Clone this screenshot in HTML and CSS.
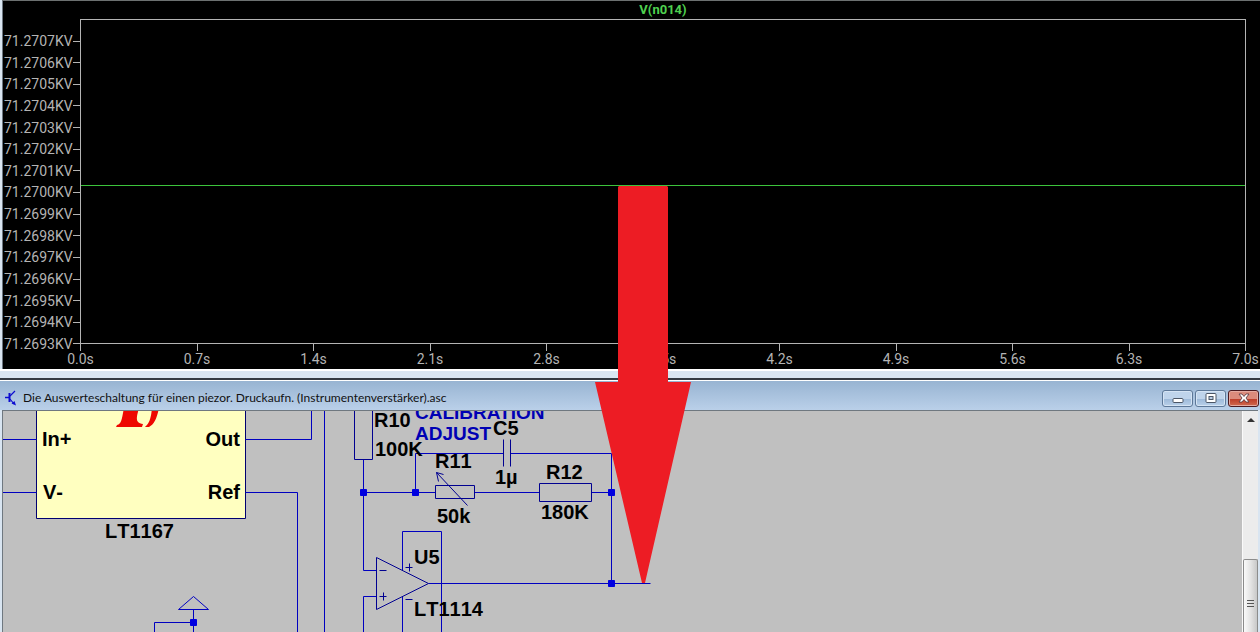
FILE: index.html
```html
<!DOCTYPE html>
<html lang="de">
<head>
<meta charset="utf-8">
<title>V(n014)</title>
<link rel="stylesheet" href="styles.css">
</head>
<body>
<main class="workspace">
  <section class="plot" aria-label="Waveform">
    <h1 class="trace-name">V(n014)</h1>
    <div class="chart">
      <ol class="y-axis">
        <li>71.2707KV</li><li>71.2706KV</li><li>71.2705KV</li><li>71.2704KV</li><li>71.2703KV</li>
        <li>71.2702KV</li><li>71.2701KV</li><li>71.2700KV</li><li>71.2699KV</li><li>71.2698KV</li>
        <li>71.2697KV</li><li>71.2696KV</li><li>71.2695KV</li><li>71.2694KV</li><li>71.2693KV</li>
      </ol>
      <div class="frame">
        <svg class="trace" aria-hidden="true"><line x1="0" y1="51.2%" x2="100%" y2="51.2%"/></svg>
      </div>
      <ol class="x-axis">
        <li>0.0s</li><li>0.7s</li><li>1.4s</li><li>2.1s</li><li>2.8s</li><li>3.5s</li>
        <li>4.2s</li><li>4.9s</li><li>5.6s</li><li>6.3s</li><li>7.0s</li>
      </ol>
    </div>
  </section>
  <div class="divider"></div>
  <section class="schematic">
    <header class="titlebar">
      <svg class="app-icon" width="12" height="16" viewBox="0 0 12 16" aria-hidden="true">
        <path d="M0 7.500H4" stroke-width="1.500"/><path d="M4.500 3V12" stroke-width="2"/><path d="M5 6L10 1M5 9L9 14" stroke-width="1.200"/><path d="M11 15.500L6.500 13.500L9.500 11Z" fill="#0c0cd0" stroke="none"/>
      </svg>
      <h2 class="file-name">Die Auswerteschaltung für einen piezor. Druckaufn. (Instrumentenverstärker).asc</h2>
      <div class="controls">
        <button class="control" aria-label="Minimize"><svg width="12" height="12" viewBox="0 0 12 12"><rect x="1" y="6.500" width="10" height="4" rx="1" fill="#fff" stroke="#4b5666"/></svg></button>
        <button class="control" aria-label="Maximize"><svg width="12" height="12" viewBox="0 0 12 12"><rect x="1" y="1.500" width="10" height="9" rx="1" fill="#fff" stroke="#4b5666"/><rect x="4" y="4.500" width="4" height="3" fill="#b8cde4" stroke="#4b5666"/></svg></button>
        <button class="control close" aria-label="Close"><svg width="12" height="12" viewBox="0 0 12 12"><path d="M1 2H4L6 4.500L8 2H11L8 6L11 10H8L6 7.500L4 10H1L4 6Z" fill="#fff" stroke="#523038" stroke-width=".8"/></svg></button>
      </div>
    </header>
    <div class="document">
      <svg class="circuit" role="img" aria-label="Circuit">
        <g transform="translate(-3 -411)">
          <g class="shapes" transform="translate(.5 .5)">
            <path class="chip" d="M36 400H245V518H36Z"/>
            <path class="wire" d="M2 439H36M2 492H36M245 439H311V405M324 405V632M245 492H297V632"/>
            <path class="wire" d="M363 459V570H376M363 492H435M474 492H539M591 492H611M415 492V453H503M510 453H611V583M428 583H650M402 570V531H441V632M402 596V632M376 596H363V632"/>
            <path class="wire" d="M193 609V632M193 622H154V632"/>
            <path class="part" d="M354 400H372V459H354ZM435 485H474V498H435ZM539 483H591V501H539ZM503 439V466M510 439V466"/>
            <path class="part" d="M376 557L428 583L376 609ZM379 570H386M379 596H386M383 592V600M405 567H412M409 563V571M405 599H412"/>
            <path class="part" d="M467 505L436 472M443 474L436 472L438 481"/>
            <path class="wire" d="M193 596L208 609H178Z"/>
            <path class="junction" d="M360 489h6v6h-6zM412 489h6v6h-6zM608 489h6v6h-6zM608 580h6v6h-6zM190 619h6v6h-6z"/>
          </g>
          <path class="logo" d="M124 408H139C137 416 134 423 143 424L142 427H116L117 425C122 424 122 417 124 408ZM152 408H159C157 417 155 424 149 427H145C150 423 151 417 152 408Z"/>
          <g class="note"><text x="415" y="419">CALIBRATION</text><text x="415" y="440">ADJUST</text></g>
          <g class="label">
            <text x="42" y="446">In+</text><text x="43" y="499">V-</text>
            <text x="240" y="446" text-anchor="end">Out</text><text x="240" y="499" text-anchor="end">Ref</text>
            <text x="105" y="538">LT1167</text>
            <text x="374" y="427">R10</text><text x="375" y="456">100K</text>
            <text x="435" y="468">R11</text><text x="437" y="523">50k</text>
            <text x="493" y="435">C5</text><text x="495" y="484">1µ</text>
            <text x="546" y="479">R12</text><text x="541" y="519">180K</text>
            <text x="414" y="564">U5</text><text x="414" y="616">LT1114</text>
          </g>
        </g>
      </svg>
      <div class="scrollbar">
        <button class="scroll-up" aria-label="Scroll up"><svg width="8" height="4" viewBox="0 0 8 4"><path d="M0 4L4 0L8 4Z" fill="#333"/></svg></button>
        <div class="thumb"><svg width="8" height="8" viewBox="0 0 8 8"><path d="M0 .5H7M0 3.500H7M0 6.500H7" stroke="#555"/></svg></div>
      </div>
    </div>
  </section>
  <svg class="arrow" width="97" height="399" viewBox="0 0 97 399" aria-hidden="true"><path d="M24 1H72L73 2V197H96L50 398H47L0 197H23V2Z" fill="#ed1c24"/></svg>
</main>
</body>
</html>
```
FILE: styles.css
```css
* { box-sizing: border-box; }

body {
  margin: 0;
  background: #d9e5f1;
  font-family: Lato, "Open Sans", sans-serif;
}

h1, h2, ol { margin: 0; padding: 0; list-style: none; }
button { padding: 0; }
svg { display: block; }

.workspace {
  position: relative;
  display: flex;
  flex-direction: column;
  min-height: 100vh;
  overflow: hidden;
}

/* waveform window */
.plot {
  margin-left: 2px;
  border-top: 1px solid #6c7070;
  border-left: 1px solid #6c7680;
  padding: 0 14px 0 1px;
  background: #000;
  overflow: hidden;
  color: #b4b4b4;
  font-family: Roboto, "Liberation Sans", sans-serif;
  font-size: 14px;
}

.trace-name {
  height: 18px;
  padding-left: 76px;
  font-size: 13px;
  line-height: 18px;
  text-align: center;
  color: #4fd04f;
}

.chart {
  display: grid;
  grid-template-columns: 76px 1fr;
  grid-template-rows: 325px 25px;
}

.y-axis {
  display: flex;
  flex-direction: column;
  justify-content: space-between;
  margin: 12px 0 -10px;
}

.y-axis li {
  display: flex;
  align-items: center;
  justify-content: space-between;
  line-height: 20px;
}

.y-axis li::after {
  content: "";
  width: 7px;
  height: 1px;
  background: #b4b4b4;
}

.frame { border: 1px solid #b4b4b4; }
.trace { width: 100%; height: 100%; }
.trace line { stroke: #3cc43c; shape-rendering: crispEdges; }

.x-axis {
  grid-column: 2;
  display: flex;
  justify-content: space-between;
  margin: 0 -20px;
}

.x-axis li {
  width: 41px;
  line-height: 17px;
  text-align: center;
}

.x-axis li::before {
  content: "";
  display: block;
  width: 1px;
  height: 7px;
  margin: 0 auto;
  background: #b4b4b4;
}

.divider {
  height: 11px;
  border-top: 2px solid #fff;
  border-bottom: 2px solid #343a42;
  background: #d9e5f1;
}

/* schematic window */
.schematic {
  flex: 1;
  display: flex;
  flex-direction: column;
  border-top: 1px solid #fff;
}

.titlebar {
  display: flex;
  align-items: center;
  height: 29px;
  padding: 5px 1px 0 5px;
  gap: 6px;
  background: linear-gradient(#98b4d2, #bad0e9);
}

.app-icon { fill: none; stroke: #0c0cd0; }

.file-name {
  flex: 1;
  font-size: 12px;
  font-weight: 400;
  line-height: 16px;
  color: #111;
}

.controls { display: flex; gap: 2px; }

.control {
  display: grid;
  place-items: center;
  width: 31px;
  height: 17px;
  border: 1px solid #5d7898;
  border-radius: 3px;
  box-shadow: inset 0 0 0 1px #d5e4f4;
  background: linear-gradient(#bfd4eb 50%, #9bb8d8 50%, #b9d0e9);
}

.close {
  border-color: #4b1a20;
  box-shadow: inset 0 0 0 1px #e5aaa0;
  background: linear-gradient(#dc8b7c 50%, #bc3a26 50%, #d06a50);
}

.document {
  flex: 1;
  display: flex;
  min-height: 222px;
  margin: 0 2px;
  border-top: 1px solid #6f7880;
  border-left: 1px solid #6f7880;
  background: #c0c0c0;
}

.circuit { flex: 1; min-width: 0; height: auto; }
.shapes { fill: none; stroke: #0000c0; }
.shapes .part { stroke: #000090; }
.shapes .chip { fill: #ffffc0; stroke: #000070; }
.shapes .junction { fill: #0000e0; stroke: #0000e0; }
.logo { fill: #ee0800; }

.label, .note { font-family: "Liberation Sans", Arial, sans-serif; font-weight: 700; }
.label { font-size: 20px; font-kerning: none; fill: #000; }
.note { font-size: 19px; fill: #0000b4; }

.scrollbar {
  display: flex;
  flex-direction: column;
  width: 16px;
  border-left: 1px solid #fafafa;
  background: #ececec;
}

.scroll-up {
  display: grid;
  place-items: center;
  height: 18px;
  border: 0;
  background: none;
}

.thumb {
  flex: 1;
  margin-top: 130px;
  padding: 40px 0 0 3px;
  border: 1px solid #8c8c8c;
  border-bottom: 0;
  border-radius: 2px 2px 0 0;
  background: linear-gradient(90deg, #fafafa, #e4e4e4 50%, #c8c8c8);
}

/* marker from the trace to the op-amp output */
.arrow { position: absolute; left: 595px; top: 185px; }
```
